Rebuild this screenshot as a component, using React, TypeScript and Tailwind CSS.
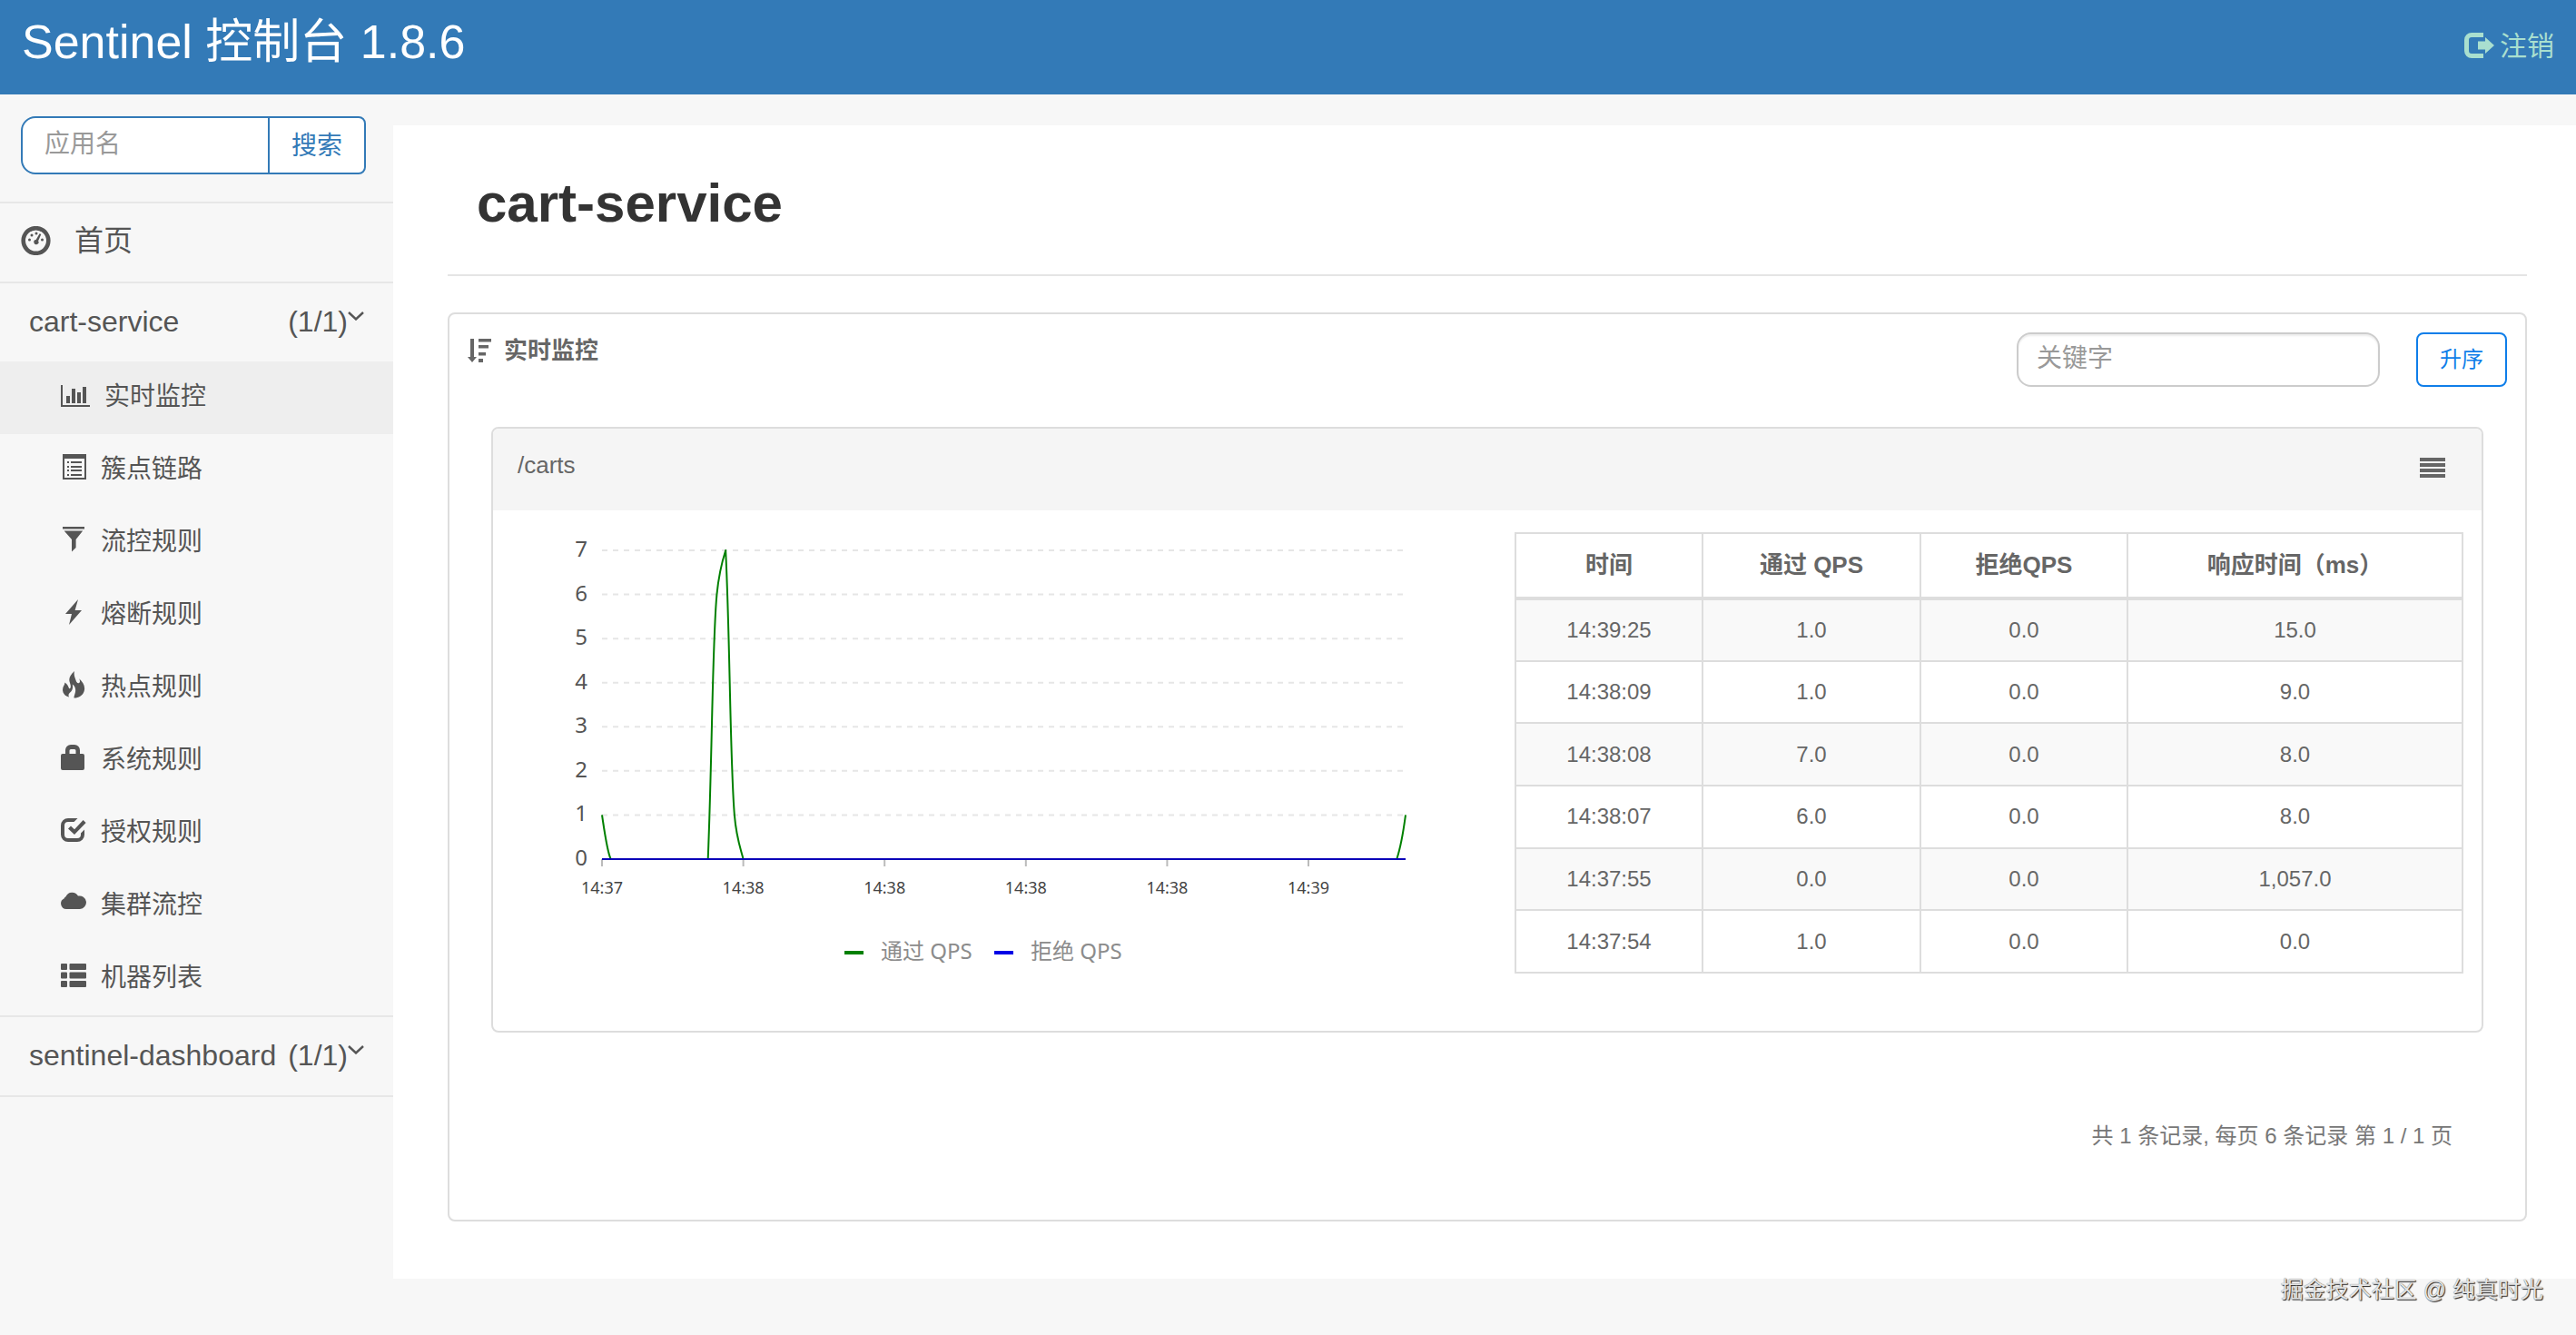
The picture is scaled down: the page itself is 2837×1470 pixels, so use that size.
import React from 'react';

interface IconProps {
    width: number;
    height: number;
    children: React.ReactNode;
}

interface MenuItem {
    label: string;
    icon: React.ReactNode;
    active?: boolean;
}

interface Metric {
    time: string;
    pass: string;
    block: string;
    rt: string;
}

const Icon: React.FC<IconProps> = ({ width, height, children }) => (
    <svg width={width} height={height} viewBox={`0 0 ${width} ${height}`} fill="currentColor" className="shrink-0" aria-hidden="true">
        {children}
    </svg>
);

const DashboardIcon = () => (
    <Icon width={33} height={32}>
        <circle cx="16.5" cy="16" r="13.8" fill="none" stroke="currentColor" strokeWidth="4.6" />
        <circle cx="9.5" cy="15" r="1.5" />
        <circle cx="12" cy="10" r="1.5" />
        <circle cx="17" cy="8" r="1.5" />
        <circle cx="23.5" cy="15" r="1.5" />
        <path d="M20.6 8.2l1.7.8-3.2 7.2a2.6 2.6 0 1 1-2.5-1.2z" />
    </Icon>
);

const BarChartIcon = () => (
    <Icon width={32} height={28}>
        <path d="M0 4h2v22h30v2H0zM6 16h4v8H6zM12 8h4v16h-4zM18 12h4v12h-4zM24 6h4v18h-4z" />
    </Icon>
);

const ListAltIcon = () => (
    <Icon width={28} height={28}>
        <path fillRule="evenodd" d="M2 0h26v28H2zM4 5v21h22V5z" />
        <path d="M7 8h2v2H7zM11 8h12v2H11zM7 13h2v2H7zM11 13h12v2H11zM7 17h2v2H7zM11 17h12v2H11zM7 22h2v2H7zM11 22h12v2H11z" />
    </Icon>
);

const FilterIcon = () => (
    <Icon width={28} height={28}>
        <path d="M2 0h24v2.4H2zM3.6 4.4h20.6L16.6 14v9l-4.6 4.6V14z" />
    </Icon>
);

const FlashIcon = () => (
    <Icon width={28} height={28}>
        <path d="M19 0L5 16h7L9 28l14-16h-7.4z" />
    </Icon>
);

const FireIcon = () => (
    <Icon width={28} height={30}>
        <path d="M15 0c-5 4.400-6.500 8-5.300 12 .7 2.400 1.500 4 .9 6.200-.3 1.300-1.500 1.300-1.900 0C8.100 16.400 7 13.600 4.200 12.400 5 15 1.500 16.600 2.100 21.500 2.600 25.500 5.500 27.800 9 28.600 8 26.600 8.500 24.600 10.200 23.400 12.700 21.600 13.700 18.600 12.800 14.600 15.500 16.200 16.700 19.600 15.900 23.200 15.500 25 14.600 27 14.400 29.500 20.500 29.800 25.800 25.600 26.100 19.500 26.300 15 23.700 11.500 20.200 8.200 21.300 10.600 21.300 12.400 20 13 18.400 13.700 17.200 12.300 16.600 10.300 15.700 7.200 13.900 4.500 15 0z" />
    </Icon>
);

const LockIcon = () => (
    <Icon width={28} height={28}>
        <path fillRule="evenodd" d="M2 10h3V6a6 6 0 0 1 6-6h4a6 6 0 0 1 6 6v4h3a2 2 0 0 1 2 2v14a2 2 0 0 1-2 2H2a2 2 0 0 1-2-2V12a2 2 0 0 1 2-2zM9.500 10h7V6.500A1.500 1.500 0 0 0 15 5h-4a1.500 1.500 0 0 0-1.500 1.500z" />
    </Icon>
);

const CheckIcon = () => (
    <Icon width={28} height={26}>
        <path d="M18.500 0H8a8 8 0 0 0-8 8v10a8 8 0 0 0 8 8h10a8 8 0 0 0 8-8v-5.500l-4 4V18a4 4 0 0 1-4 4H8a4 4 0 0 1-4-4V8a4 4 0 0 1 4-4h6.500z" />
        <path d="M8 11.500l3-3 4 3.800L24.600 2l3 3L15 18z" />
    </Icon>
);

const CloudIcon = () => (
    <Icon width={28} height={28}>
        <path d="M6 21a6 6 0 0 1-2.500-11.400A4.200 4.200 0 0 1 5.500 7.200 7.500 7.500 0 0 1 19 6.600 7.300 7.300 0 1 1 21 21z" />
    </Icon>
);

const ThListIcon = () => (
    <Icon width={28} height={26}>
        {[0, 9.5, 19].map((y) => (
            <React.Fragment key={y}>
                <rect x="0" y={y} width="7" height="7" rx="1" />
                <rect x="9.5" y={y} width="18.5" height="7" rx="1" />
            </React.Fragment>
        ))}
    </Icon>
);

const ChevronIcon = () => (
    <svg width="18" height="10" viewBox="0 0 18 10" fill="none" stroke="currentColor" strokeWidth="2.4" aria-hidden="true">
        <path d="M1 1l8 7.500L17 1" />
    </svg>
);

const SortIcon = () => (
    <Icon width={26} height={26}>
        <path d="M3 0h4v20h3l-5 6-5-6h3zM12 0h14v3.500H12zM12 7h11v3.500H12zM12 15h8v3.500h-8zM12 22h5v4h-5z" />
    </Icon>
);

const LogoutIcon = () => (
    <Icon width={33} height={28}>
        <path d="M21 0v5H8a3 3 0 0 0-3 3v12a3 3 0 0 0 3 3h13v5H8a8 8 0 0 1-8-8V8a8 8 0 0 1 8-8z" />
        <path d="M15 9.500h8V5l10 9-10 9v-4.500h-8z" />
    </Icon>
);

const menus: MenuItem[] = [
    { label: '实时监控', icon: <BarChartIcon />, active: true },
    { label: '簇点链路', icon: <ListAltIcon /> },
    { label: '流控规则', icon: <FilterIcon /> },
    { label: '熔断规则', icon: <FlashIcon /> },
    { label: '热点规则', icon: <FireIcon /> },
    { label: '系统规则', icon: <LockIcon /> },
    { label: '授权规则', icon: <CheckIcon /> },
    { label: '集群流控', icon: <CloudIcon /> },
    { label: '机器列表', icon: <ThListIcon /> },
];

const metrics: Metric[] = [
    { time: '14:39:25', pass: '1.0', block: '0.0', rt: '15.0' },
    { time: '14:38:09', pass: '1.0', block: '0.0', rt: '9.0' },
    { time: '14:38:08', pass: '7.0', block: '0.0', rt: '8.0' },
    { time: '14:38:07', pass: '6.0', block: '0.0', rt: '8.0' },
    { time: '14:37:55', pass: '0.0', block: '0.0', rt: '1,057.0' },
    { time: '14:37:54', pass: '1.0', block: '0.0', rt: '0.0' },
];

const Header = () => (
    <header className="flex h-[104px] justify-between bg-[#337ab7] px-6">
        <h2 className="text-[52px] leading-[92px] text-white">Sentinel 控制台 1.8.6</h2>
        <a href="#" className="flex items-center gap-1.5 pb-1 text-[30px] text-[#a9dfcf]">
            <LogoutIcon />
            <span>注销</span>
        </a>
    </header>
);

const AppRow = ({ name }: { name: string }) => (
    <a href="#" className="flex h-[88px] items-center justify-between border-t-2 border-[#e7e7e7] pl-8 pr-8 pb-0.5 text-[32px]">
        <span>{name}</span>
        <span className="flex items-center">
            (1/1)
            <span className="pb-3">
                <ChevronIcon />
            </span>
        </span>
    </a>
);

const Sidebar = () => (
    <aside className="w-[433px] shrink-0 text-[#555]">
        <form className="flex pl-[23px] pr-[30px] pt-6 pb-[30px]" onSubmit={(e) => e.preventDefault()}>
            <input
                type="text"
                aria-label="应用名"
                placeholder="应用名"
                className="h-16 min-w-0 flex-1 rounded-l-2xl border-2 border-[#337ab7] bg-white px-6 pb-0.5 text-[28px] placeholder:text-[#999]"
            />
            <button type="submit" className="-ml-0.5 h-16 w-[108px] rounded-r-lg border-2 border-[#337ab7] bg-white pt-0.5 text-[28px] text-[#337ab7]">
                搜索
            </button>
        </form>
        <nav>
            <a href="#" className="flex h-[88px] items-center gap-[26px] border-t-2 border-[#e7e7e7] pl-[23px] pb-1 text-[32px]">
                <DashboardIcon />
                <span>首页</span>
            </a>
            <AppRow name="cart-service" />
            <ul>
                {menus.map((item) => (
                    <li key={item.label} className={item.active ? 'bg-[#eee]' : ''}>
                        <a href="#" className="flex h-20 items-center gap-4 pl-[67px] pb-0.5 text-[28px]">
                            <span className="pb-1.5">{item.icon}</span>
                            <span>{item.label}</span>
                        </a>
                    </li>
                ))}
            </ul>
            <AppRow name="sentinel-dashboard" />
            <div className="border-t-2 border-[#e7e7e7]" />
        </nav>
    </aside>
);

const QpsChart = () => {
    const left = 120;
    const right = 1005;
    const bottom = 384;
    const unit = 340 / 7;
    const step = (right - left) / 91;
    const px = (i: number) => left + i * step;
    const py = (v: number) => bottom - v * unit;

    const line = [
        `M${px(0)} ${py(1)}C${px(0.3)} ${py(0.6)} ${px(0.6)} ${py(0.15)} ${px(1)} ${py(0)}`,
        `L${px(12)} ${py(0)}C${px(12.5)} ${py(2.5)} ${px(12.5)} ${py(5)} ${px(13)} ${py(6)}`,
        `C${px(13.2)} ${py(6.4)} ${px(13.6)} ${py(6.75)} ${px(14)} ${py(7)}`,
        `C${px(14.5)} ${py(5)} ${px(14.5)} ${py(2.2)} ${px(15)} ${py(1)}`,
        `C${px(15.2)} ${py(0.5)} ${px(15.6)} ${py(0.3)} ${px(16)} ${py(0)}`,
        `L${px(90)} ${py(0)}C${px(90.5)} ${py(0.3)} ${px(90.8)} ${py(0.7)} ${px(91)} ${py(1)}`,
    ].join('');

    return (
        <svg viewBox="0 0 1095 573" className="block w-full font-['Noto_Sans','Noto_Sans_CJK_SC',sans-serif]">
            {[0, 1, 2, 3, 4, 5, 6, 7].map((v) => (
                <g key={v}>
                    {v > 0 && (
                        <line x1={left} x2={right} y1={py(v)} y2={py(v)} stroke="#e6e6e6" strokeWidth="2" strokeDasharray="6 6" />
                    )}
                    <text x="104" y={py(v) + 7} textAnchor="end" className="fill-[#555] text-[24px]">{v}</text>
                </g>
            ))}
            {['14:37', '14:38', '14:38', '14:38', '14:38', '14:39'].map((label, i) => (
                <g key={i}>
                    <line x1={px(i * 16)} x2={px(i * 16)} y1={bottom} y2={bottom + 8} stroke="#bbb" strokeWidth="2" />
                    <text x={px(i * 16)} y="422" textAnchor="middle" className="fill-[#444] text-[18px]">{label}</text>
                </g>
            ))}
            <path d={line} fill="none" stroke="#008000" strokeWidth="2" strokeLinejoin="round" />
            <line x1={left} x2={right} y1={bottom} y2={bottom} stroke="#0a00b8" strokeWidth="2" />
            <rect x="387" y="485" width="21" height="4" fill="#008000" />
            <text x="427" y="494" className="fill-[#8c8c8c] text-[24px]">通过 QPS</text>
            <rect x="552" y="485" width="21" height="4" fill="#0000e6" />
            <text x="592" y="494" className="fill-[#8c8c8c] text-[24px]">拒绝 QPS</text>
        </svg>
    );
};

const MetricTable = () => (
    <table className="h-[486px] w-full table-fixed border-collapse border-2 border-[#ddd] text-center text-[24px] text-[#666]">
        <colgroup>
            <col className="w-[206px]" />
            <col className="w-[240px]" />
            <col className="w-[228px]" />
            <col />
        </colgroup>
        <thead>
            <tr className="h-[72px] text-[26px]">
                {['时间', '通过 QPS', '拒绝QPS', '响应时间（ms）'].map((title) => (
                    <th key={title} className="border-2 border-b-4 border-[#ddd] font-bold">{title}</th>
                ))}
            </tr>
        </thead>
        <tbody>
            {metrics.map((row) => (
                <tr key={row.time} className="h-[68px] odd:bg-[#f9f9f9]">
                    <td className="border-2 border-[#ddd]">{row.time}</td>
                    <td className="border-2 border-[#ddd]">{row.pass}</td>
                    <td className="border-2 border-[#ddd]">{row.block}</td>
                    <td className="border-2 border-[#ddd]">{row.rt}</td>
                </tr>
            ))}
        </tbody>
    </table>
);

const ResourceCard = () => (
    <section className="mx-[46px] mt-11 overflow-hidden rounded-lg border-2 border-[#ddd]">
        <div className="bg-[#f5f5f5] pb-2.5">
            <div className="flex h-20 items-center justify-between pl-[27px] pr-10">
                <span className="text-[26px] text-[#666]">/carts</span>
                <button type="button" aria-label="menu" className="text-[#666]">
                    <Icon width={28} height={28}>
                        <path d="M0 6h28v4H0zM0 12h28v4H0zM0 18h28v4H0zM0 24h28v4H0z" />
                    </Icon>
                </button>
            </div>
        </div>
        <div className="grid grid-cols-2">
            <QpsChart />
            <div className="pt-6 pl-[30px] pr-5">
                <MetricTable />
            </div>
        </div>
    </section>
);

const App: React.FC = () => {
    return (
        <div className="min-h-screen bg-[#f7f7f7] font-['Liberation_Sans','Noto_Sans_CJK_SC',sans-serif]">
            <Header />
            <div className="flex">
                <Sidebar />
                <main className="mt-[34px] min-w-0 flex-1 self-start bg-white pl-[60px] pr-[54px] pb-[63px]">
                    <h1 className="border-b-2 border-[#e5e5e5] pt-[52px] pb-11 pl-8 text-[60px] leading-[68px] font-bold text-[#333]">
                        cart-service
                    </h1>
                    <section className="mt-10 rounded-lg border-2 border-[#ddd]">
                        <div className="flex items-start justify-between p-5 pb-0">
                            <h3 className="flex items-center gap-3.5 text-[26px] leading-10 font-bold text-[#666]">
                                <SortIcon />
                                实时监控
                            </h3>
                            <div className="flex gap-10">
                                <input
                                    type="text"
                                    aria-label="关键字"
                                    placeholder="关键字"
                                    className="h-[60px] w-[400px] rounded-2xl border-2 border-[#ccc] px-5 pb-0.5 text-[28px] shadow-[inset_0_2px_2px_rgba(0,0,0,0.075)] placeholder:text-[#999]"
                                />
                                <button type="button" className="h-[60px] w-[100px] rounded-lg border-2 border-[#0f7ee9] text-[24px] text-[#0f7ee9]">
                                    升序
                                </button>
                            </div>
                        </div>
                        <ResourceCard />
                        <p className="pt-[94px] pb-[72px] pr-20 text-right text-[24px] leading-10 text-[#777]">
                            共 1 条记录, 每页 6 条记录 第 1 / 1 页
                        </p>
                    </section>
                </main>
            </div>
            <div className="absolute right-9 bottom-[30px] text-[25px] leading-10 text-[#e4e4e4] [text-shadow:1px_1px_1px_#222,0_0_1px_#666]">
                掘金技术社区 @ 纯真时光
            </div>
        </div>
    );
};

export default App;
